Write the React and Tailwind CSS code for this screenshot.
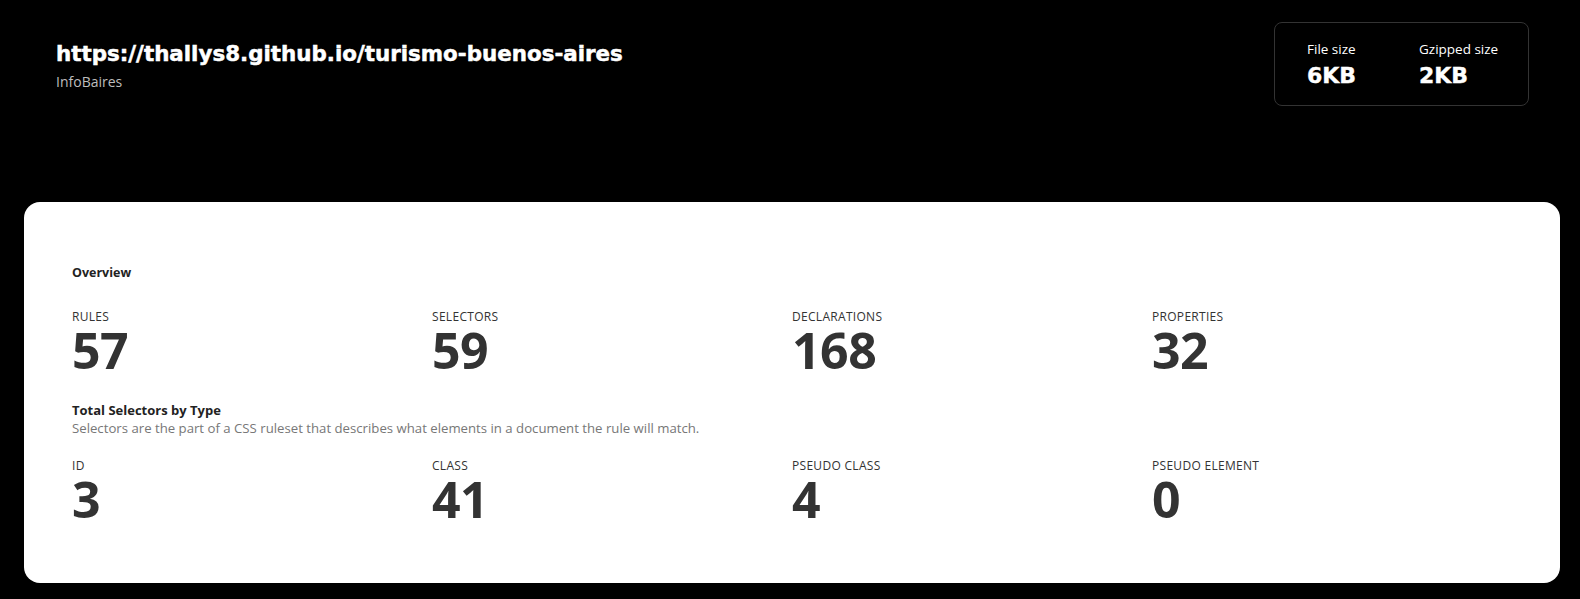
import React from "react";

const Stat = ({ label, value }) => (
  <div className="flex flex-col">
    <div className="text-[12px] leading-[16px] tracking-[0.3px] text-[#333] uppercase">{label}</div>
    <div className="text-[50px] leading-[50px] font-bold text-[#333] tracking-[-0.5px]">{value}</div>
  </div>
);

const heavy = { fontFamily: '"DejaVu Sans", Verdana, sans-serif' };

export default function App() {
  return (
    <div className="min-h-[599px] bg-black" style={{ fontFamily: '"Open Sans", "Noto Sans", sans-serif' }}>
      <div className="flex justify-between items-start pl-[56px] pr-[51px] pt-[22px]">
        <div className="pt-[18px]">
          <div className="text-white font-bold text-[21.4px] leading-[28px] [-webkit-text-stroke:0.5px_white]" style={heavy}>
            https://thallys8.github.io/turismo-buenos-aires
          </div>
          <div className="text-[#bdbdbd] text-[14px] leading-[20px] mt-[4px]">InfoBaires</div>
        </div>
        <div className="w-[255px] h-[84px] border border-[#333] rounded-[8px] flex pl-[32px] pt-[17px]">
          <div className="flex flex-col w-[112px]">
            <div className="text-white text-[13.5px] leading-[18px]">File size</div>
            <div className="text-white font-bold text-[22px] leading-[30px] mt-[3px] [-webkit-text-stroke:0.4px_white]" style={heavy}>6KB</div>
          </div>
          <div className="flex flex-col">
            <div className="text-white text-[13.5px] leading-[18px]">Gzipped size</div>
            <div className="text-white font-bold text-[22px] leading-[30px] mt-[3px] [-webkit-text-stroke:0.4px_white]" style={heavy}>2KB</div>
          </div>
        </div>
      </div>
      <div className="ml-[24px] mr-[20px] mt-[96px] bg-white rounded-[16px] px-[48px] pt-[63px] pb-[59px]">
        <div className="text-[12.5px] leading-[16px] font-bold text-[#222]">Overview</div>
        <div className="grid grid-cols-4 mt-[28px]">
          <Stat label="Rules" value="57" />
          <Stat label="Selectors" value="59" />
          <Stat label="Declarations" value="168" />
          <Stat label="Properties" value="32" />
        </div>
        <div className="mt-[27px] text-[13px] leading-[16px] font-bold text-[#222]">Total Selectors by Type</div>
        <div className="text-[13.2px] leading-[19px] mt-[1px] text-[#777]">Selectors are the part of a CSS ruleset that describes what elements in a document the rule will match.</div>
        <div className="grid grid-cols-4 mt-[20px]">
          <Stat label="ID" value="3" />
          <Stat label="Class" value="41" />
          <Stat label="Pseudo Class" value="4" />
          <Stat label="Pseudo Element" value="0" />
        </div>
      </div>
    </div>
  );
}
